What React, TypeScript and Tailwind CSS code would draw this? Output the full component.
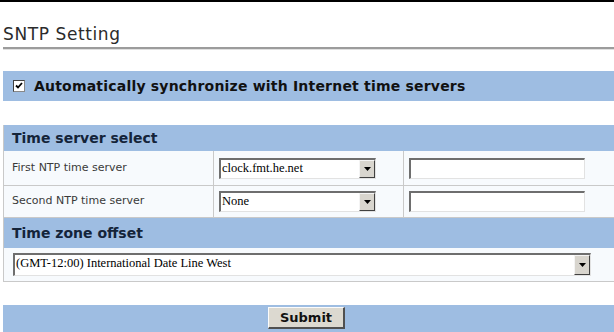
import React from "react";

function Arrow() {
  return (
    <div className="flex h-full w-[16px] shrink-0 items-center justify-center border-t border-l border-t-[#f4f4f4] border-l-[#f4f4f4] border-b border-r border-b-[#404040] border-r-[#404040] bg-[#d8d5ce]">
      <svg width="7" height="4" viewBox="0 0 7 4">
        <path d="M0 0h7L3.5 4z" fill="#000" />
      </svg>
    </div>
  );
}

function Select({ value, className }: { value: string; className: string }) {
  return (
    <div className={`flex items-stretch border-t-2 border-l-2 border-t-[#6e6e6e] border-l-[#6e6e6e] border-b border-r border-b-[#e2e2e2] border-r-[#e2e2e2] bg-white ${className}`}>
      <span className="flex-1 truncate pl-px font-['Liberation_Serif',serif] text-[12.5px] leading-[17px] text-black">{value}</span>
      <Arrow />
    </div>
  );
}

function TextBox() {
  return (
    <div className="h-[21px] w-[176px] border-t-2 border-l-2 border-t-[#6e6e6e] border-l-[#6e6e6e] border-b border-r border-b-[#e2e2e2] border-r-[#e2e2e2] bg-white" />
  );
}

export default function App() {
  const rows = [
    { label: "First NTP time server", value: "clock.fmt.he.net", h: "h-[35px]" },
    { label: "Second NTP time server", value: "None", h: "h-[32px]" },
  ];

  return (
    <div className="min-h-screen w-full bg-white font-['DejaVu_Sans',Verdana,sans-serif]">
      <div className="h-[2px] bg-black" />

      {/* Title */}
      <div className="pl-[3px] pt-[22px]">
        <h1 className="pb-[3px] text-[17px] leading-[20px] font-normal tracking-[0.6px] text-[#2b2b2b]">SNTP Setting</h1>
        <div className="h-[2px] bg-[#9c9c9c]" />
        <div className="h-px bg-[#e0e0e0]" />
      </div>

      {/* Auto sync bar */}
      <div className="mt-[21px] ml-[3px] flex h-[30px] items-center gap-[9px] bg-[#9ebde2] pl-[10px]">
        <div className="flex h-[12px] w-[12px] items-center justify-center border-t border-l border-t-[#404040] border-l-[#404040] border-b border-r border-b-[#888] border-r-[#888] bg-white">
          <svg width="8" height="8" viewBox="0 0 8 8">
            <path d="M1 3.5l2 2 4-4.5" stroke="#000" strokeWidth="1.8" fill="none" />
          </svg>
        </div>
        <span className="text-[14px] font-bold tracking-[0.2px] text-[#111]">Automatically synchronize with Internet time servers</span>
      </div>

      {/* Table */}
      <div className="mt-[24px] ml-[3px] border-l border-[#c9c9c9]">
        <div className="flex h-[26px] items-center bg-[#9ebde2] pl-[8px] text-[14px] font-bold text-[#14243a]">
          Time server select
        </div>
        {rows.map((r) => (
          <div key={r.label} className={`flex border-b border-[#c9c9c9] bg-[#f7fafd] ${r.h}`}>
            <div className="flex w-[210px] items-center border-r border-[#c9c9c9] pl-[8px] text-[11px] text-[#3a3a3a]">
              {r.label}
            </div>
            <div className="flex w-[190px] items-center border-r border-[#c9c9c9] pl-[5px]">
              <Select value={r.value} className="h-[21px] w-[157px]" />
            </div>
            <div className="flex flex-1 items-center pl-[5px]">
              <TextBox />
            </div>
          </div>
        ))}
        <div className="flex h-[30px] items-center bg-[#9ebde2] pl-[8px] text-[14px] font-bold text-[#14243a]">
          Time zone offset
        </div>
        <div className="flex h-[34px] items-center border-b border-[#c9c9c9] bg-[#f7fafd] pl-[9px]">
          <Select value="(GMT-12:00) International Date Line West" className="h-[23px] w-[578px]" />
        </div>
      </div>

      {/* Submit */}
      <div className="mt-[23px] ml-[3px] flex h-[30px] items-start justify-center bg-[#9ebde2] pt-[2px] pr-[4px]">
        <button className="h-[22px] w-[77px] border-t border-l border-t-[#fbfbfb] border-l-[#fbfbfb] border-b-2 border-r-2 border-b-[#505050] border-r-[#505050] bg-[#dcd9d0] text-[13px] font-bold leading-none text-[#111]">
          Submit
        </button>
      </div>
    </div>
  );
}
